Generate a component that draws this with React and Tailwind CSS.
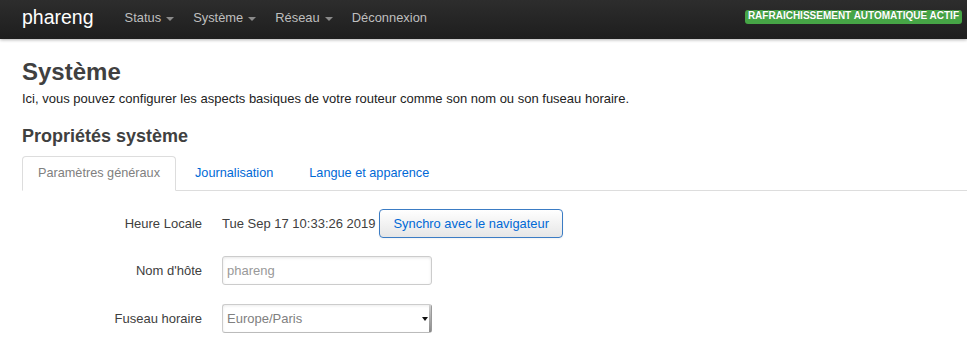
export default function App() {
  const font = { fontFamily: '"Liberation Sans", Arial, Helvetica, sans-serif' };
  const Caret = () => (
    <span className="ml-[5px] inline-block w-0 h-0 border-l-[4px] border-r-[4px] border-t-[4px] border-l-transparent border-r-transparent border-t-[#8a8a8a] mt-[2px]" />
  );
  return (
    <div style={font} className="w-[967px] h-[346px] bg-white overflow-hidden text-[13px] text-[#404040]">
      <div className="relative z-10 h-[39px] flex items-start bg-gradient-to-b from-[#2d2d2d] to-[#1e1e1e] shadow-[0_1px_3px_rgba(0,0,0,0.3)] pl-[22px] pr-[5px]">
        <div className="mt-[7px] leading-[20px] text-[19.5px] text-white">phareng</div>
        <nav className="ml-[31px] mt-[8px] flex items-center gap-[19px] leading-[20px] text-[12.9px] text-[#bfbfbf]">
          <span className="flex items-center">Status<Caret /></span>
          <span className="flex items-center">Système<Caret /></span>
          <span className="flex items-center">Réseau<Caret /></span>
          <span>Déconnexion</span>
        </nav>
        <div className="ml-auto mt-[10px] h-[14px] px-[3px] pb-[2px] leading-[12px] text-[10px] font-bold uppercase text-white bg-[#46a546] rounded-[3px] [text-shadow:0_-1px_0_rgba(0,0,0,0.25)]">
          Rafraichissement automatique actif
        </div>
      </div>

      <div className="px-[22px] pt-[15px]">
        <h1 className="text-[24px] leading-[36px] font-bold text-[#404040]">Système</h1>
        <p className="text-[13px] leading-[18px] text-[#222]">
          Ici, vous pouvez configurer les aspects basiques de votre routeur comme son nom ou son fuseau horaire.
        </p>
        <h2 className="mt-[15px] text-[18px] leading-[27px] font-bold text-[#404040]">Propriétés système</h2>

        <div className="mt-[6px] -mr-[22px] flex border-b border-[#ddd] text-[12.7px]">
          <span className="-mb-px block px-[15px] pt-[7px] pb-[8px] leading-[18px] border border-[#ddd] border-b-white bg-white rounded-t-[4px] text-[#808080]">
            Paramètres généraux
          </span>
          <span className="-mb-px ml-[2px] block px-[16px] pt-[7px] pb-[8px] leading-[18px] border border-transparent text-[#0069d6]">
            Journalisation
          </span>
          <span className="-mb-px ml-[2px] block px-[16px] pt-[7px] pb-[8px] leading-[18px] border border-transparent text-[#0069d6]">
            Langue et apparence
          </span>
        </div>

        <div className="mt-[18px] flex items-center h-[29px]">
          <div className="w-[180px] text-right">Heure Locale</div>
          <div className="ml-[20px] flex items-center">
            <span>Tue Sep 17 10:33:26 2019</span>
            <span className="ml-[4px] h-[29px] flex items-center px-[13px] border border-[#3b7cc4] rounded-[4px] bg-gradient-to-b from-white to-[#e6e6e6] text-[#0069d6] text-[12.9px] shadow-[inset_0_1px_0_rgba(255,255,255,0.2),0_1px_2px_rgba(0,0,0,0.05)]">
              Synchro avec le navigateur
            </span>
          </div>
        </div>

        <div className="mt-[18px] flex items-center h-[29px]">
          <div className="w-[180px] text-right">Nom d'hôte</div>
          <input
            className="ml-[20px] w-[210px] h-[29px] px-[4px] border border-[#ccc] rounded-[3px] shadow-[inset_0_1px_3px_rgba(0,0,0,0.1)] text-[13px] text-[#808080] placeholder:text-[#999] outline-none"
            placeholder="phareng"
            readOnly
          />
        </div>

        <div className="mt-[19px] flex items-center h-[29px]">
          <div className="w-[180px] text-right">Fuseau horaire</div>
          <div className="ml-[20px] relative w-[210px] h-[29px] flex items-center pl-[4px] border border-[#ccc] border-r-[#9a9a9a] border-b-[#bbb] rounded-[3px] shadow-[inset_0_1px_3px_rgba(0,0,0,0.08)] text-[#808080]">
            <span>Europe/Paris</span>
            <span className="absolute right-[3px] top-[12px] w-0 h-0 border-l-[3px] border-r-[3px] border-t-[4px] border-l-transparent border-r-transparent border-t-[#111]" />
            <span className="absolute right-0 top-0 bottom-0 w-[2px] bg-gradient-to-b from-[#d0d0d0] to-[#8a8a8a]" />
          </div>
        </div>
      </div>
    </div>
  );
}
